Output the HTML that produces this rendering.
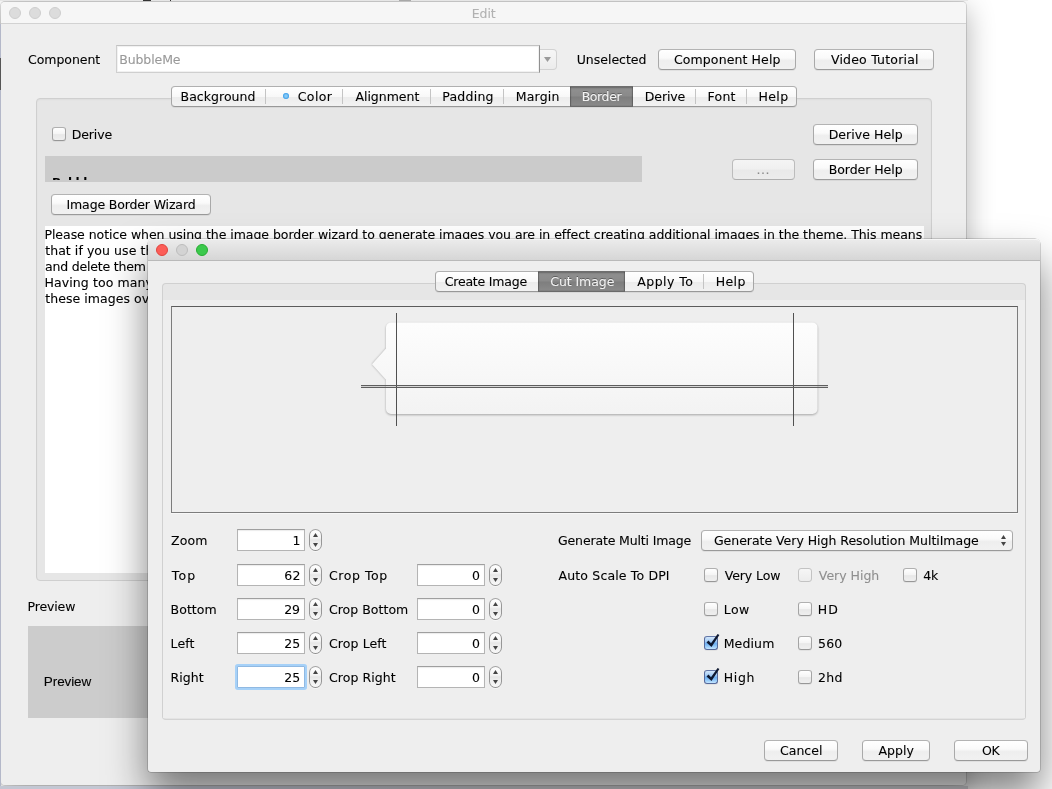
<!DOCTYPE html>
<html lang="en"><head><meta charset="utf-8"><title>Edit</title>
<style>
html,body{margin:0;padding:0}
body{width:1052px;height:789px;overflow:hidden;position:relative;background:#fff;font-family:"DejaVu Sans","Liberation Sans",sans-serif;font-size:12.5px;color:#000}
div,span,i,svg{position:absolute;box-sizing:border-box}
.t{-webkit-text-stroke:.1px;white-space:pre;line-height:16px;height:16px}
.win{background:#eeeeee;border-radius:5px 5px 3px 3px}
.win.back{border-radius:5px;box-shadow:0 8px 28px rgba(0,0,0,.30);border:1px solid;border-color:rgba(0,0,0,.17) rgba(0,0,0,.13) rgba(0,0,0,.12) rgba(0,0,0,.12);background-clip:padding-box}
.win.front{box-shadow:0 0 0 .5px rgba(0,0,0,.3),0 23px 40px rgba(0,0,0,.5)}
.win .tbar{left:0;top:0;right:0;height:23px;border-radius:4px 4px 0 0}
.back .tbar{height:22px}
.back .tbar{background:#f6f6f6;border-bottom:1px solid #d2d2d2}
.front .tbar{height:22px;background:linear-gradient(#ececec,#d6d6d6);border-bottom:1px solid #b9b9b9;box-shadow:inset 0 1px 0 #f6f6f6}
.tl{width:12px;height:12px;border-radius:50%;border:1px solid}
.tf{background:#fff;border:1px solid #cfcfcf;border-top-color:#c2c2c2;border-right-color:#909090;box-shadow:inset 0 0 0 1px #f1f1f1,inset 0 1px 1px rgba(0,0,0,.06)}
.cbtn{background:linear-gradient(#f6f6f6,#ececec);border:1px solid #d2d2d2;border-left:none;border-radius:0 4px 4px 0}
.cbtn i{left:4px;top:7px;width:7px;height:5px;background:#9a9a9a;clip-path:polygon(0 0,100% 0,50% 100%)}
.btn{border-radius:4px;border:1px solid #a9a9a9;border-bottom-color:#9a9a9a;border-top-color:#b3b3b3;background:linear-gradient(#ffffff,#fafafa 42%,#eeeeee 56%,#f1f1f1);box-shadow:0 1px 0 rgba(0,0,0,.06)}
.btn.dis{border-color:#bcbcbc;border-bottom-color:#aeaeae;background:linear-gradient(#f4f4f4,#f0f0f0 45%,#e9e9e9 55%,#ececec);box-shadow:none}
.panel{background:#e6e6e6;border:1px solid #cfcfcf;border-radius:4px;box-shadow:inset 0 1px 2px rgba(0,0,0,.04)}
.panel2{background:#e6e6e6;border:1px solid #d0d0d0;border-bottom-color:#d3d3d3;border-radius:4px;box-shadow:inset 0 -1px 0 #e4e4e4}
.tabs{border-radius:4px;border:1px solid #a6a6a6;border-top-color:#b0b0b0;border-bottom-color:#989898;background:linear-gradient(#ffffff,#f8f8f8 50%,#ececec 52%,#f2f2f2);box-shadow:0 1px 0 rgba(0,0,0,.06);overflow:hidden}
.tabs .sep{top:2px;bottom:2px;width:1px;background:#c4c4c4}
.sel{border-top:1px solid #6e6e6e;border-bottom:1px solid #6a6a6a;background:linear-gradient(#909090,#8a8a8a 48%,#7e7e7e 52%,#8a8a8a);box-shadow:inset 0 1px 2px rgba(0,0,0,.25),inset 1px 0 1px rgba(0,0,0,.22),inset -1px 0 1px rgba(0,0,0,.22)}
.cb{width:14px;height:14px;border-radius:3px;border:1px solid #a4a4a4;border-top-color:#b0b0b0;border-bottom-color:#979797;background:linear-gradient(#ffffff,#f4f4f4 50%,#e8e8e8 55%,#efefef);box-shadow:0 1px 0 rgba(0,0,0,.05)}
.cb.on{border-color:#56699a;border-top-color:#6478a8;background:linear-gradient(#d3e7fb,#a5ccf5 35%,#6fb0f2 55%,#8fc6f8 75%,#c4e6ff)}
.cb.dis{border-color:#c3c3c3;background:linear-gradient(#f6f6f6,#ececec);box-shadow:none}
.fld{background:#fff;border:1px solid #b4b4b4;border-top-color:#9f9f9f;box-shadow:inset 0 1px 1px rgba(0,0,0,.08)}
.fld.foc{box-shadow:0 0 0 2px #a6d1f8;border-color:#90b9e2;border-radius:1px}
.spin{width:13px;height:22px;border-radius:6.5px;border:1px solid #979797;border-top-color:#a4a4a4;border-bottom-color:#8d8d8d;background:linear-gradient(#ffffff,#f4f4f4 40%,#e6e6e6 50%,#ececec 60%,#f8f8f8);box-shadow:0 1px 0 rgba(255,255,255,.5)}
.spin .up{left:3px;top:3px}
.spin .dn{left:3px;top:13px}
.up{width:5px;height:4px;background:#444;clip-path:polygon(50% 0,100% 100%,0 100%)}
.dn{width:5px;height:4px;background:#444;clip-path:polygon(0 0,100% 0,50% 100%)}
.canvas{border:1px solid #7c7c7c;border-top-color:#5c5c5c;background:#eeeeee;box-shadow:0 1px 0 #f7f7f7}
#root{left:0;top:0;width:1052px;height:789px;will-change:transform}

</style></head>
<body>
<div id="root">
<div class="win back" style="left:0px;top:1px;width:967px;height:785px"><div class="tbar"></div></div>
<div class="abs" style="left:0;top:0;width:968px;height:1px;background:#e6e6e6"></div>
<div class="abs" style="left:143px;top:0;width:8px;height:1px;background:#333"></div>
<div class="abs" style="left:170px;top:0;width:1px;height:1px;background:#333"></div>
<div class="abs" style="left:399px;top:0;width:12px;height:1px;background:#a8a8a8"></div>
<div class="abs" style="left:0;top:24px;width:1px;height:765px;background:#b4b8c9"></div>
<div class="abs" style="left:0;top:58px;width:1px;height:32px;background:#555"></div>
<div class="abs" style="left:0;top:786px;width:968px;height:3px;background:linear-gradient(90deg,#c3c7d3 0,#c3c7d3 25%,#c8c8cc 55%)"></div>
<div class="tl" style="left:9px;top:7px;background:#dcdcdc;border-color:#cecece"></div>
<div class="tl" style="left:29px;top:7px;background:#dcdcdc;border-color:#cecece"></div>
<div class="tl" style="left:49px;top:7px;background:#dcdcdc;border-color:#cecece"></div>
<span class="t" style="left:471.75px;top:6.00px;letter-spacing:-0.083px;color:#b2b2b2;">Edit</span>
<span class="t" style="left:28.05px;top:52.00px;letter-spacing:-0.044px;">Component</span>
<div class="tf" style="left:116px;top:45px;width:424px;height:28px;"></div>
<span class="t" style="left:119.25px;top:52.00px;letter-spacing:-0.107px;color:#999;">BubbleMe</span>
<div class="cbtn" style="left:540px;top:49px;width:17px;height:21px"><i></i></div>
<span class="t" style="left:576.65px;top:52.00px;letter-spacing:0.000px;">Unselected</span>
<div class="btn" style="left:658px;top:49px;width:138px;height:21px;"></div>
<span class="t" style="left:673.95px;top:52.00px;letter-spacing:0.112px;">Component Help</span>
<div class="btn" style="left:814px;top:49px;width:120px;height:21px;"></div>
<span class="t" style="left:830.95px;top:52.00px;letter-spacing:0.200px;">Video Tutorial</span>
<div class="panel" style="left:36px;top:98px;width:896px;height:483px;"></div>
<div class="tabs" style="left:171px;top:86px;width:626px;height:21px">
<i class="sep" style="left:93px"></i>
<i class="sep" style="left:170px"></i>
<i class="sep" style="left:258px"></i>
<i class="sep" style="left:331px"></i>
<i class="sep" style="left:523px"></i>
<i class="sep" style="left:574px"></i>
</div>
<div class="sel" style="left:570px;top:86px;width:63px;height:21px"></div>
<span class="t" style="left:180.55px;top:89.00px;letter-spacing:0.039px;">Background</span>
<span class="t" style="left:297.75px;top:89.00px;letter-spacing:0.375px;">Color</span>
<span class="t" style="left:355.45px;top:89.00px;letter-spacing:-0.025px;">Alignment</span>
<span class="t" style="left:442.25px;top:89.00px;letter-spacing:0.242px;">Padding</span>
<span class="t" style="left:515.65px;top:89.00px;letter-spacing:0.230px;">Margin</span>
<span class="t" style="left:581.65px;top:89.00px;letter-spacing:-0.390px;color:#f2f2f2;text-shadow:0 -1px 0 rgba(0,0,0,.35);">Border</span>
<span class="t" style="left:644.85px;top:89.00px;letter-spacing:-0.110px;">Derive</span>
<span class="t" style="left:707.55px;top:89.00px;letter-spacing:0.233px;">Font</span>
<span class="t" style="left:758.55px;top:89.00px;letter-spacing:0.367px;">Help</span>
<div class="abs" style="left:282.75px;top:92.75px;width:6.5px;height:6.5px;border-radius:50%;background:radial-gradient(circle,#86c9f6 0 28%,#2c96e8 72%)"></div>
<div class="cb" style="left:52px;top:127px"></div>
<span class="t" style="left:71.75px;top:127.00px;letter-spacing:-0.110px;">Derive</span>
<div class="btn" style="left:813px;top:124px;width:105px;height:21px;"></div>
<span class="t" style="left:828.65px;top:127.00px;letter-spacing:0.060px;">Derive Help</span>
<div class="abs" style="left:45px;top:156px;width:597px;height:25.5px;background:#cbcbcb;overflow:hidden"><div style="left:0;top:0;width:597px;height:24px;overflow:hidden"><span style="left:7px;top:20.3px;font-size:12px;font-weight:bold;line-height:14px;letter-spacing:-.9px;color:#000;white-space:pre">Bubble</span></div></div>
<div class="btn dis" style="left:732px;top:159px;width:63px;height:21px;"></div>
<span class="t" style="left:756.40px;top:162.20px;letter-spacing:0.625px;color:#8a8a8a;">...</span>
<div class="btn" style="left:813px;top:159px;width:105px;height:21px;"></div>
<span class="t" style="left:828.65px;top:162.00px;letter-spacing:-0.040px;">Border Help</span>
<div class="btn" style="left:51px;top:194px;width:160px;height:21px;"></div>
<span class="t" style="left:66.55px;top:196.70px;letter-spacing:-0.144px;">Image Border Wizard</span>
<div class="abs" style="left:45px;top:226px;width:878.5px;height:346.5px;background:#fff"></div>
<span class="t" style="left:44.45px;top:226.60px;letter-spacing:-0.040px;">Please notice when using the image border wizard to generate images you are in effect creating additional images in the theme. This means</span>
<span class="t" style="left:45.20px;top:242.60px;letter-spacing:0.065px;">that if you use th</span>
<span class="t" style="left:44.95px;top:258.60px;letter-spacing:-0.179px;">and delete them</span>
<span class="t" style="left:44.45px;top:274.60px;letter-spacing:0.104px;">Having too many</span>
<span class="t" style="left:45.20px;top:290.60px;letter-spacing:0.061px;">these images ov</span>
<span class="t" style="left:27.55px;top:598.70px;letter-spacing:-0.142px;">Preview</span>
<div class="abs" style="left:28px;top:626px;width:912px;height:92px;background:#cccccc"></div>
<span class="t" style="left:43.85px;top:674.20px;letter-spacing:-0.100px;font-family:'Liberation Sans',sans-serif;font-size:13.5px;">Preview</span>
<div class="win front" style="left:148px;top:239px;width:892px;height:533px"><div class="tbar"></div></div>
<div class="tl" style="left:156px;top:244px;background:#fc5d57;border-color:#e0443e"></div>
<div class="tl" style="left:176px;top:244px;background:#d3d3d3;border-color:#bdbdbd"></div>
<div class="tl" style="left:196px;top:244px;background:#3bc94c;border-color:#27ad33"></div>
<div class="panel2" style="left:162px;top:283px;width:864px;height:437px;"></div>
<div class="abs" style="left:163px;top:300px;width:862px;height:418px;background:#eeeeee"></div>
<div class="tabs" style="left:435px;top:271px;width:319px;height:21px">
<i class="sep" style="left:267px"></i>
</div>
<div class="sel" style="left:538px;top:271px;width:87px;height:21px"></div>
<span class="t" style="left:444.75px;top:274.30px;letter-spacing:-0.209px;">Create Image</span>
<span class="t" style="left:550.25px;top:274.30px;letter-spacing:-0.075px;color:#f2f2f2;text-shadow:0 -1px 0 rgba(0,0,0,.35);">Cut Image</span>
<span class="t" style="left:637.35px;top:274.30px;letter-spacing:0.450px;">Apply To</span>
<span class="t" style="left:715.65px;top:274.30px;letter-spacing:0.433px;">Help</span>
<div class="canvas" style="left:171px;top:306px;width:847px;height:207px;"></div>
<svg class="abs" style="left:355px;top:308px" width="480" height="125" viewBox="355 308 480 125"><defs><linearGradient id="bg1" x1="0" y1="0" x2="0" y2="1"><stop offset="0" stop-color="#fdfdfd"/><stop offset="1" stop-color="#f3f3f3"/></linearGradient><filter id="sh" x="-5%" y="-10%" width="110%" height="130%"><feGaussianBlur stdDeviation="0.8"/></filter></defs><path d="M391 323.5 H812.5 a5 5 0 0 1 5 5 V410 a5 5 0 0 1 -5 5 H391 a5 5 0 0 1 -5 -5 V379.8 L372 364.2 L386 348.6 V328.5 a5 5 0 0 1 5 -5 Z" fill="#000" opacity=".3" filter="url(#sh)"/><path d="M391 322.5 H812.5 a5 5 0 0 1 5 5 V409 a5 5 0 0 1 -5 5 H391 a5 5 0 0 1 -5 -5 V379.8 L372 364.2 L386 348.6 V327.5 a5 5 0 0 1 5 -5 Z" fill="url(#bg1)"/><rect x="396" y="313" width="1" height="113" fill="#505050"/><rect x="793" y="313" width="1" height="113" fill="#505050"/><rect x="361" y="385" width="467" height="3" fill="#000" opacity=".12"/><rect x="361" y="385" width="467" height="1" fill="#5e5e5e"/><rect x="361" y="387" width="467" height="1" fill="#5e5e5e"/></svg>
<span class="t" style="left:171.05px;top:532.80px;letter-spacing:0.133px;">Zoom</span>
<div class="fld" style="left:237px;top:529px;width:68px;height:22px;"></div>
<span class="t" style="left:292.60px;top:532.80px;letter-spacing:0.000px;">1</span>
<div class="spin" style="left:309px;top:529px"><i class="up"></i><i class="dn"></i></div>
<span class="t" style="left:171.80px;top:567.80px;letter-spacing:1.150px;">Top</span>
<div class="fld" style="left:237px;top:564px;width:68px;height:22px;"></div>
<span class="t" style="left:284.20px;top:567.80px;letter-spacing:0.250px;">62</span>
<div class="spin" style="left:309px;top:564px"><i class="up"></i><i class="dn"></i></div>
<span class="t" style="left:328.95px;top:567.80px;letter-spacing:0.579px;">Crop Top</span>
<div class="fld" style="left:417px;top:564px;width:68px;height:22px;"></div>
<span class="t" style="left:472.10px;top:567.80px;letter-spacing:0.000px;">0</span>
<div class="spin" style="left:489px;top:564px"><i class="up"></i><i class="dn"></i></div>
<span class="t" style="left:170.55px;top:601.80px;letter-spacing:0.060px;">Bottom</span>
<div class="fld" style="left:237px;top:598px;width:68px;height:22px;"></div>
<span class="t" style="left:284.20px;top:601.80px;letter-spacing:-0.250px;">29</span>
<div class="spin" style="left:309px;top:598px"><i class="up"></i><i class="dn"></i></div>
<span class="t" style="left:328.95px;top:601.80px;letter-spacing:0.035px;">Crop Bottom</span>
<div class="fld" style="left:417px;top:598px;width:68px;height:22px;"></div>
<span class="t" style="left:472.10px;top:601.80px;letter-spacing:0.000px;">0</span>
<div class="spin" style="left:489px;top:598px"><i class="up"></i><i class="dn"></i></div>
<span class="t" style="left:170.55px;top:635.80px;letter-spacing:0.150px;">Left</span>
<div class="fld" style="left:237px;top:632px;width:68px;height:22px;"></div>
<span class="t" style="left:284.20px;top:635.80px;letter-spacing:0.000px;">25</span>
<div class="spin" style="left:309px;top:632px"><i class="up"></i><i class="dn"></i></div>
<span class="t" style="left:328.95px;top:635.80px;letter-spacing:0.112px;">Crop Left</span>
<div class="fld" style="left:417px;top:632px;width:68px;height:22px;"></div>
<span class="t" style="left:472.10px;top:635.80px;letter-spacing:0.000px;">0</span>
<div class="spin" style="left:489px;top:632px"><i class="up"></i><i class="dn"></i></div>
<span class="t" style="left:170.55px;top:669.80px;letter-spacing:0.037px;">Right</span>
<div class="fld foc" style="left:237px;top:666px;width:68px;height:22px;"></div>
<span class="t" style="left:284.20px;top:669.80px;letter-spacing:0.000px;">25</span>
<div class="spin" style="left:309px;top:666px"><i class="up"></i><i class="dn"></i></div>
<span class="t" style="left:328.95px;top:669.80px;letter-spacing:0.072px;">Crop Right</span>
<div class="fld" style="left:417px;top:666px;width:68px;height:22px;"></div>
<span class="t" style="left:472.10px;top:669.80px;letter-spacing:0.000px;">0</span>
<div class="spin" style="left:489px;top:666px"><i class="up"></i><i class="dn"></i></div>
<span class="t" style="left:558.05px;top:532.80px;letter-spacing:-0.153px;">Generate Multi Image</span>
<div class="btn" style="left:701px;top:530px;width:312px;height:21px;"></div>
<span class="t" style="left:713.95px;top:532.80px;letter-spacing:-0.026px;">Generate Very High Resolution MultiImage</span>
<div class="abs" style="left:1001px;top:535px;width:6px;height:12px"><i class="up" style="left:0;top:0"></i><i class="dn" style="left:0;top:7px"></i></div>
<span class="t" style="left:558.55px;top:567.80px;letter-spacing:0.150px;">Auto Scale To DPI</span>
<div class="cb" style="left:704px;top:568px"></div>
<span class="t" style="left:724.65px;top:567.80px;letter-spacing:-0.086px;">Very Low</span>
<div class="cb" style="left:704px;top:602px"></div>
<span class="t" style="left:723.65px;top:601.80px;letter-spacing:0.525px;">Low</span>
<div class="cb on" style="left:704px;top:636px"><svg width="18" height="18" viewBox="0 -4 18 18" style="left:-1px;top:-5px;overflow:visible"><path d="M2.5 6.5 L4.5 4.6 L7.0 7.3 L13.6 -2.0 L15.4 -0.9 L7.5 11 Z" fill="#0e1830"/></svg></div>
<span class="t" style="left:723.65px;top:635.80px;letter-spacing:0.150px;">Medium</span>
<div class="cb on" style="left:704px;top:670px"><svg width="18" height="18" viewBox="0 -4 18 18" style="left:-1px;top:-5px;overflow:visible"><path d="M2.5 6.5 L4.5 4.6 L7.0 7.3 L13.6 -2.0 L15.4 -0.9 L7.5 11 Z" fill="#0e1830"/></svg></div>
<span class="t" style="left:723.65px;top:669.80px;letter-spacing:0.717px;">High</span>
<div class="cb dis" style="left:798px;top:568px"></div>
<span class="t" style="left:818.85px;top:567.80px;letter-spacing:-0.013px;color:#8f8f8f;">Very High</span>
<div class="cb" style="left:798px;top:602px"></div>
<span class="t" style="left:817.85px;top:601.80px;letter-spacing:0.950px;">HD</span>
<div class="cb" style="left:798px;top:636px"></div>
<span class="t" style="left:818.10px;top:635.80px;letter-spacing:0.150px;">560</span>
<div class="cb" style="left:798px;top:670px"></div>
<span class="t" style="left:818.10px;top:669.80px;letter-spacing:0.275px;">2hd</span>
<div class="cb" style="left:903px;top:568px"></div>
<span class="t" style="left:923.25px;top:567.80px;letter-spacing:-0.300px;">4k</span>
<div class="btn" style="left:764px;top:740px;width:74px;height:21px;"></div>
<span class="t" style="left:780.05px;top:742.80px;letter-spacing:0.000px;">Cancel</span>
<div class="btn" style="left:862px;top:740px;width:68px;height:21px;"></div>
<span class="t" style="left:878.45px;top:742.80px;letter-spacing:0.050px;">Apply</span>
<div class="btn" style="left:954px;top:740px;width:74px;height:21px;"></div>
<span class="t" style="left:982.05px;top:742.80px;letter-spacing:-0.400px;">OK</span>
</div>
</body></html>
